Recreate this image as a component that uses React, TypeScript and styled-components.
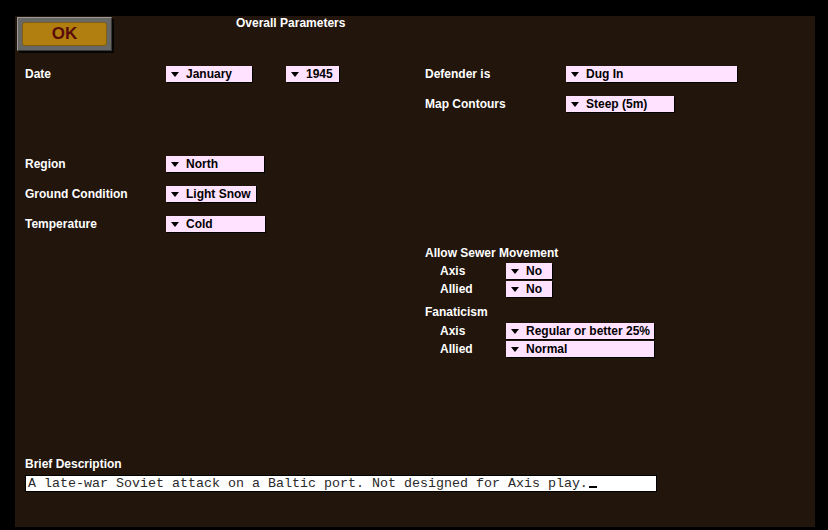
import React from "react";
import styled, { createGlobalStyle } from "styled-components";

const Global = createGlobalStyle`
  html, body { margin: 0; padding: 0; background: #000; }
  body { font-family: "Liberation Sans", Arial, sans-serif; }
`;

const Screen = styled.div`
  width: 828px;
  height: 530px;
  box-sizing: border-box;
  padding: 16px 13px 3px 15px;
  background: #000;
`;

const Panel = styled.div`
  width: 800px;
  height: 511px;
  box-sizing: border-box;
  background: #21150c;
  display: flex;
  flex-direction: column;
  padding: 1px 0 35px 0;
`;

const Header = styled.div`
  display: flex;
  align-items: flex-start;
  padding-left: 2px;
  height: 34px;
`;

const OkButton = styled.div`
  width: 95px;
  height: 34px;
  box-sizing: border-box;
  background: #676765;
  border-top: 1px solid #9a9a98;
  border-left: 1px solid #9a9a98;
  border-right: 1px solid #3a3a38;
  border-bottom: 1px solid #3a3a38;
  box-shadow: 2px 2px 0 #050505;
  padding: 4px;
  display: flex;
`;

const OkFace = styled.div`
  flex: 1;
  border-radius: 3px;
  background: #b07f0f;
  border: 1px solid #806010;
  display: flex;
  align-items: center;
  justify-content: center;
  font-weight: bold;
  font-size: 17px;
  color: #5a0c0a;
`;

const Title = styled.div`
  margin-left: 124px;
  margin-top: -1px;
  font-size: 12px;
  line-height: 14px;
  font-weight: bold;
  color: #fff;
`;

const Body = styled.div`
  display: grid;
  grid-template-columns: 400px 1fr;
  padding-left: 10px;
  margin-top: 8px;
`;

const Column = styled.div`
  display: flex;
  flex-direction: column;
`;

const Row = styled.div<{ $mt?: number }>`
  display: flex;
  align-items: center;
  height: 30px;
  margin-top: ${(p) => p.$mt ?? 0}px;
`;

const Label = styled.div<{ $w?: number }>`
  width: ${(p) => p.$w ?? 141}px;
  flex: none;
  font-size: 12px;
  font-weight: bold;
  color: #fff;
  white-space: nowrap;
`;

const Dropdown = styled.div<{ $w: number; $ml?: number }>`
  width: ${(p) => p.$w}px;
  height: 16px;
  margin-left: ${(p) => p.$ml ?? 0}px;
  box-sizing: border-box;
  background: #ffe2ff;
  box-shadow: 1px 1px 0 #000;
  display: flex;
  align-items: center;
  padding-left: 5px;
  font-size: 12px;
  font-weight: bold;
  color: #000;
  white-space: nowrap;
`;

const Arrow = styled.span`
  width: 0;
  height: 0;
  border-left: 4.5px solid transparent;
  border-right: 4.5px solid transparent;
  border-top: 5px solid #000;
  margin-right: 7px;
  margin-top: 1px;
`;

const Section = styled.div<{ $mt: number }>`
  display: flex;
  flex-direction: column;
  margin-top: ${(p) => p.$mt}px;
`;

const Heading = styled.div`
  height: 16px;
  line-height: 16px;
  font-size: 12px;
  font-weight: bold;
  color: #fff;
`;

const SubList = styled.div<{ $mt: number }>`
  display: flex;
  flex-direction: column;
  margin-top: ${(p) => p.$mt}px;
  padding-left: 15px;
`;

const SubRow = styled.div`
  display: flex;
  align-items: center;
  height: 18px;
`;

const Description = styled.div`
  margin-top: auto;
  padding-left: 10px;
  display: flex;
  flex-direction: column;
`;

const TextBox = styled.div`
  margin-top: 3px;
  width: 632px;
  height: 17px;
  box-sizing: border-box;
  background: #fff;
  border: 1px solid #000;
  padding-left: 2px;
  font-family: "Liberation Mono", "Courier New", monospace;
  font-size: 13.33px;
  line-height: 15px;
  color: #2a2a2a;
  white-space: pre;
`;

const Cursor = styled.span`
  display: inline-block;
  width: 8px;
  height: 2px;
  background: #000;
  margin-left: 1px;
  vertical-align: -1px;
`;

const Select = ({ w, ml, children }: { w: number; ml?: number; children: React.ReactNode }) => (
  <Dropdown $w={w} $ml={ml}>
    <Arrow />
    {children}
  </Dropdown>
);

export default function App() {
  return (
    <>
      <Global />
      <Screen>
        <Panel>
          <Header>
            <OkButton>
              <OkFace>OK</OkFace>
            </OkButton>
            <Title>Overall Parameters</Title>
          </Header>
          <Body>
            <Column>
              <Row>
                <Label>Date</Label>
                <Select w={86}>January</Select>
                <Select w={53} ml={34}>1945</Select>
              </Row>
              <Row $mt={60}>
                <Label>Region</Label>
                <Select w={98}>North</Select>
              </Row>
              <Row>
                <Label>Ground Condition</Label>
                <Select w={90}>Light Snow</Select>
              </Row>
              <Row>
                <Label>Temperature</Label>
                <Select w={99}>Cold</Select>
              </Row>
            </Column>
            <Column>
              <Row>
                <Label>Defender is</Label>
                <Select w={171}>Dug In</Select>
              </Row>
              <Row>
                <Label>Map Contours</Label>
                <Select w={108}>Steep (5m)</Select>
              </Row>
              <Section $mt={126}>
                <Heading>Allow Sewer Movement</Heading>
                <SubList $mt={1}>
                  <SubRow>
                    <Label $w={66}>Axis</Label>
                    <Select w={46}>No</Select>
                  </SubRow>
                  <SubRow>
                    <Label $w={66}>Allied</Label>
                    <Select w={46}>No</Select>
                  </SubRow>
                </SubList>
              </Section>
              <Section $mt={6}>
                <Heading>Fanaticism</Heading>
                <SubList $mt={2}>
                  <SubRow>
                    <Label $w={66}>Axis</Label>
                    <Select w={148}>Regular or better 25%</Select>
                  </SubRow>
                  <SubRow>
                    <Label $w={66}>Allied</Label>
                    <Select w={148}>Normal</Select>
                  </SubRow>
                </SubList>
              </Section>
            </Column>
          </Body>
          <Description>
            <Heading>Brief Description</Heading>
            <TextBox>
              A late-war Soviet attack on a Baltic port. Not designed for Axis play.
              <Cursor />
            </TextBox>
          </Description>
        </Panel>
      </Screen>
    </>
  );
}
